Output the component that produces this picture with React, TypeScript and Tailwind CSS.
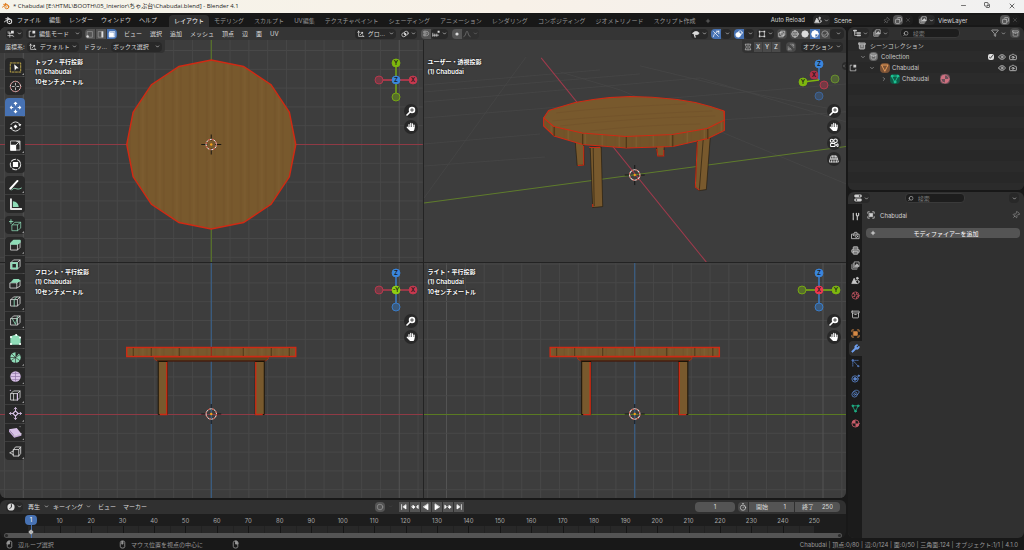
import type { ReactNode } from 'react';
import { ChevronDown, ChevronRight, ChevronLeft, Search, Pin, Copy, X, Plus, Minus, Filter, Eye, Camera, Timer, Wrench, Printer, Archive, Magnet } from 'lucide-react';

const MENUS = ['ファイル', '編集', 'レンダー', 'ウィンドウ', 'ヘルプ'];
const WORKSPACES = ['レイアウト', 'モデリング', 'スカルプト', 'UV編集', 'テクスチャペイント', 'シェーディング', 'アニメーション', 'レンダリング', 'コンポジティング', 'ジオメトリノード', 'スクリプト作成'];
const VIEW_MENUS = ['ビュー', '選択', '追加', 'メッシュ', '頂点', '辺', '面', 'UV'];

const RED = '#c8384f';
const GREEN = '#7fb80e';
const BLUE = '#3a86dd';
const MINT = '#8fdcb8';
const LILAC = '#d9c3e8';

// 20x20 drawing box shared by every hand-drawn icon
function Ico({ className = 'size-2', children }: { className?: string; children: ReactNode }) {
  return (
    <svg viewBox="0 0 20 20" className={`${className} shrink-0`} fill="none" stroke="currentColor" strokeWidth="1.8" strokeLinejoin="round" strokeLinecap="round" aria-hidden="true">
      {children}
    </svg>
  );
}

const CUBE = 'M3 7h10v10H3zM3 7l4-4h10v10l-4 4M13 7l4-4';

const icons = {
  blender: (
    <>
      <path d="M1 13L10 6H4M10 6L8 3l8 6" strokeWidth="2.2" />
      <circle cx="12" cy="12" r="5" strokeWidth="2.4" />
      <circle cx="12" cy="12" r="1.6" fill="currentColor" stroke="none" />
    </>
  ),
  mesh: (
    <>
      <path d="M4 6v9M7 4h7M7 16h7M16 7v6" />
      <path d="M2 2h4v4H2zM14 2h4v4h-4zM2 14h4v4H2zM14 14h4v4h-4z" fill="currentColor" stroke="none" />
    </>
  ),
  viewport: (
    <>
      <path d="M2 14h11M7 7v11M3 8h7" />
      <path d="M10 2h7v7h-7z" fill="currentColor" stroke="none" />
      <path d="M2 5h4M13 14l4 2" />
    </>
  ),
  editmode: (
    <>
      <path d="M3 7V3h4M17 13v4h-4M7 17H3v-4M3 9v2M9 17h2" />
      <path d="M11 2h7v7h-7z" fill="currentColor" stroke="none" />
    </>
  ),
  vert: <><path d="M3 17V4h13v13z" opacity=".5" /><circle cx="4" cy="16" r="3" fill="currentColor" stroke="none" /></>,
  edge: <><path d="M3 17V4h13v13z" opacity=".5" /><path d="M13 5v12" strokeWidth="4" /></>,
  face: <><path d="M4 16V4h13v13H4z" /><path d="M4 7h10v10H4z" fill="currentColor" /></>,
  axes: <path d="M4 3v13h13M4 3L2 6M4 3l2 3M17 16l-3-2M8 12l6-6M14 6h-4M14 6v4" />,
  link: <><circle cx="7" cy="12" r="5" /><circle cx="13" cy="8" r="5" /><circle cx="10" cy="10" r="1.5" fill="currentColor" /></>,
  snap: <><path d="M2 8v8M2 13h14M7 10v6M12 10v6" /><path d="M14 2h5v5h-5z" fill="currentColor" stroke="none" /></>,
  dot: <circle cx="10" cy="10" r="4" fill="currentColor" stroke="none" />,
  falloff: <path d="M2 17c5 0 5-14 8-14s3 14 8 14" />,
  visibility: <><path d="M2 8c4-6 12-6 16 0-4 5-12 5-16 0z" fill="currentColor" /><path d="M6 12l2 6" strokeWidth="3" /></>,
  gizmo: <path d="M3 17C5 8 12 5 17 3M17 3h-6M17 3v6M4 4l12 12" />,
  overlays: <><circle cx="8" cy="12" r="6" fill="currentColor" /><circle cx="13" cy="7" r="5" /></>,
  xray: <path d="M3 7h10v10H3zM7 7V3h10v10h-4M7 7v6h6" />,
  wire: <><circle cx="10" cy="10" r="8" /><path d="M2 10h16M10 2v16M10 2c-5 4-5 12 0 16M10 2c5 4 5 12 0 16" strokeWidth="1.2" /></>,
  solid: <circle cx="10" cy="10" r="8" fill="currentColor" />,
  matprev: <><circle cx="10" cy="10" r="8" /><path d="M10 2a8 8 0 0 0 0 16V10h8a8 8 0 0 0-8-8z" fill="currentColor" /></>,
  rendered: <><circle cx="10" cy="10" r="8" /><path d="M5 12c4 3 9 0 10-5" /></>,
  scene: <><path d="M2 16L7 5l5 11z" fill="currentColor" /><circle cx="14" cy="13" r="4" /><circle cx="14" cy="5" r="2" fill="currentColor" /></>,
  layers: <><path d="M2 8v10h11M5 5v10h10" /><path d="M8 2h10v10H8z" /><path d="M9 11l4-5 4 5z" fill="currentColor" /></>,
  outliner: <><path d="M2 4h6M11 10h7M11 16h7" strokeWidth="4" /><path d="M4 4v12h5M4 10h5" /></>,
  props: <><path d="M4 5h12" strokeWidth="7" /><path d="M4 15h12" strokeWidth="7" /><circle cx="6" cy="15" r="2" fill="#222" stroke="none" /><circle cx="14" cy="5" r="2" fill="#222" stroke="none" /></>,
  object: <><path d="M6 6h8v8H6z" fill="currentColor" /><path d="M2 6V2h4M14 2h4v4M18 14v4h-4M6 18H2v-4" /></>,
  clock: <><circle cx="10" cy="10" r="9" fill="currentColor" stroke="none" /><path d="M11 4v6l-4 4" stroke="#222" strokeWidth="2.4" /></>,
  tool: <path d="M5 3v7M5 12v5M12 3v4l2 3v7M17 3v4l-3 3" strokeWidth="2.6" />,
  render: <><path d="M2 7h16v10H2zM6 7l2-4h5l1 4" /><circle cx="12" cy="12" r="2.5" /><path d="M5 10h2" /></>,
  world: <><circle cx="10" cy="10" r="8" /><path d="M5 5l4 3-1 4-4 1M12 3l1 5 4 2M12 17l1-4 4-1" strokeWidth="2.4" /></>,
  particles: <><path d="M4 3l12 13M4 3v13M4 3h12" strokeDasharray="3 2" /><circle cx="4" cy="3" r="2" fill="currentColor" /><circle cx="16" cy="16" r="1.4" fill="currentColor" /></>,
  physics: <><circle cx="9" cy="11" r="7" /><circle cx="9" cy="11" r="3" fill="currentColor" /><circle cx="17" cy="4" r="1.6" fill="currentColor" /></>,
  constraint: <><circle cx="8" cy="12" r="6" /><circle cx="8" cy="12" r="2" /><path d="M5 6c3-5 12-4 13 0 0 4-3 5-4 7" /></>,
  data: <><path d="M4 4h12l-6 12z" /><circle cx="4" cy="4" r="2" fill="currentColor" /><circle cx="16" cy="4" r="2" fill="currentColor" /><circle cx="10" cy="16" r="2" fill="currentColor" /></>,
  material: <><circle cx="10" cy="10" r="8" /><path d="M10 2a8 8 0 0 0-8 8h8v8a8 8 0 0 0 8-8h-8z" fill="currentColor" stroke="none" /></>,
  mirror: <path d="M8 3H3l3 7-3 7h5M12 3h5l-3 7 3 7h-5M10 2v16" strokeWidth="1.5" />,
  automerge: <><path d="M3 17V9M3 17h8M8 3h9v9" strokeDasharray="3 2" /><circle cx="14" cy="6" r="2" /><circle cx="6" cy="14" r="2" /></>,
  zoom: <><circle cx="12" cy="8" r="6.5" fill="currentColor" stroke="none" /><path d="M7 13l-5 5" strokeWidth="3.2" /><path d="M12 5v6M9 8h6" stroke="#2a2a2a" strokeWidth="1.6" /></>,
  hand: (
    <>
      <path d="M6 10V5M9.500 9V2.500M13 9V3.500M16.200 10V6M2.500 10.500L6 14" strokeWidth="2.4" />
      <path d="M4.800 10h12.600c0 4-1 6-2.400 8H8c-2-2-3-4-3.200-8z" fill="currentColor" stroke="none" />
    </>
  ),
  movie: <><circle cx="5.500" cy="5.500" r="3" strokeWidth="2.2" /><circle cx="13" cy="5.500" r="3.500" strokeWidth="2.2" /><path d="M4 11h8v6H4zM14 14l4-2.500v5z" strokeWidth="2" /></>,
  persp: <path d="M5 4h10l4 12H1zM3 10h14M10 4v12M7 4L5 16M13 4l2 12" strokeWidth="1.4" />,
};

const tools: { label: string; corner?: boolean; art: ReactNode }[][] = [
  [
    {
      label: 'ボックス選択', corner: true, art: (
        <><path d="M2 3h16v14H2z" stroke="#c9b04a" strokeDasharray="3 2" strokeWidth="1.4" /><path d="M8 5l7 6-4 .5L9 15z" fill="#fff" stroke="none" /></>
      ),
    },
    {
      label: 'カーソル', art: (
        <><circle cx="10" cy="10" r="8" stroke="#ddd" strokeWidth="1.5" /><circle cx="10" cy="10" r="8" stroke="#a55" strokeDasharray="3 4" strokeWidth="1.5" /><path d="M10 5v3M10 12v3M5 10h3M12 10h3" strokeWidth="1.2" /></>
      ),
    },
  ],
  [
    { label: '移動', art: <path d="M10 2v4M10 14v4M2 10h4M14 10h4M8 4l2-2 2 2M8 16l2 2 2-2M4 8l-2 2 2 2M16 8l2 2-2 2" stroke="#fff" strokeWidth="1.6" /> },
    { label: '回転', art: <><path d="M3 7a8 8 0 0 1 14 0M17 13a8 8 0 0 1-14 0" strokeWidth="1.5" /><path d="M10 7l3 3-3 3-3-3z" fill="#fff" stroke="none" /><path d="M19 6l-2 4-3-3zM1 14l2-4 3 3z" fill="#fff" stroke="none" /></> },
    { label: 'スケール', corner: true, art: <><path d="M3 3h14v14H3z" strokeWidth="1.2" /><path d="M2 9h9v9H2z" fill="#fff" stroke="none" /><path d="M11 9l5-5M12 4h4v4" strokeWidth="1.4" /></> },
    { label: 'トランスフォーム', art: <><circle cx="10" cy="10" r="8" strokeDasharray="7 3" strokeWidth="1.6" /><path d="M6 6h8v8H6z" fill="#fff" stroke="none" /></> },
  ],
  [
    { label: 'アノテート', corner: true, art: <><path d="M2 15L13 3" stroke="#fff" strokeWidth="3" /><path d="M4 17c5-7 7 2 15-3" stroke={MINT} strokeWidth="1.4" /></> },
    { label: '計測', art: <><path d="M3 2v15h16" stroke="#e8e8e8" strokeWidth="3" /><path d="M6 14V5a10 10 0 0 1 9 9z" fill={MINT} stroke="none" /></> },
  ],
  [{ label: '立方体を追加', corner: true, art: <><path d="M5 9h8v9H5zM5 9l4-4h9v9l-5 4M13 9l5-4" stroke={MINT} strokeWidth="1.1" /><path d="M3 1v6M0 4h6" stroke={MINT} strokeWidth="1.4" /></> }],
  [
    { label: '領域を押し出し', corner: true, art: <><path d={CUBE} strokeWidth="1.2" /><path d="M3 8V6l4-4h10v3l-4 3z" fill={MINT} stroke={MINT} /></> },
    { label: '面を差し込む', art: <><path d={CUBE} strokeWidth="1.2" /><path d="M4 8h8v8H4z" stroke={MINT} strokeWidth="2.6" /></> },
    { label: 'ベベル', art: <><path d="M2 9h10v8H2zM12 9l5-4v9l-5 3" strokeWidth="1.2" /><path d="M2 9l5-6h8l3 3-5 3z" fill={MINT} stroke="none" /></> },
    { label: 'ループカット', corner: true, art: <><path d={CUBE} strokeWidth="1.2" /><path d="M8 17V7l4-4" stroke={MINT} strokeWidth="1.4" /></> },
    { label: 'ナイフ', corner: true, art: <><path d={CUBE} strokeWidth="1.2" /><path d="M5 7l5 9 3-12" stroke={MINT} strokeWidth="1.3" /></> },
    { label: 'ポリビルド', art: <><path d="M3 6l8-3 6 4v10H3z" fill={MINT} stroke={MINT} /><path d="M3 6h.1M11 3h.1M17 7h.1M17 17h.1M3 17h.1" stroke="#fff" strokeWidth="3" /></> },
    { label: 'スピン', corner: true, art: <><circle cx="10" cy="10" r="8" fill={MINT} stroke="none" /><path d="M10 10l8-5M10 10l7 5M10 10v8M10 10l-7 5M10 10H2M10 10L4 4" stroke="#303030" strokeWidth="1" /><path d="M10 10V1l6 2z" fill="#282828" stroke="none" /></> },
    { label: 'スムーズ', corner: true, art: <><circle cx="10" cy="10" r="8" fill={LILAC} stroke="none" /><path d="M2 10h16M10 2v16M5 5q3 1 10 0M5 15q3-1 10 0" stroke="#8f74a5" strokeWidth="1.1" /></> },
    { label: '辺をスライド', corner: true, art: <><path d={CUBE} strokeWidth="1.2" /><path d="M7 7v10" strokeWidth="1.2" /><path d="M2 2h.1M13 7v10" stroke={LILAC} strokeWidth="1.8" /></> },
    { label: '収縮/膨張', corner: true, art: <><path d="M10 6l4 4-4 4-4-4z" stroke={LILAC} /><path d="M10 1v5M10 14v5M1 10h5M14 10h5M8 3l2-2 2 2M8 17l2 2 2-2M3 8l-2 2 2 2M17 8l2 2-2 2" stroke={LILAC} strokeWidth="1.4" /></> },
    { label: 'せん断', corner: true, art: <><path d="M0 5l12-2 7 9-11 3z" fill={LILAC} stroke="none" /><path d="M0 5v4l8 9 11-3v-3l-11 3z" fill="#c3a8d6" stroke="none" /><path d="M8 15l11-3M17 1h.1" stroke="#eee" strokeWidth="1" /></> },
    { label: '領域をリップ', corner: true, art: <path d="M7 7h8v10H7zM7 7l3-4h8v10l-3 4M15 7l3-4M7 9l-6 3 6 3" strokeWidth="1.3" /> },
  ],
];

function IconMenu({ children, label, className = 'bg-[#282828]' }: { children: ReactNode; label: string; className?: string }) {
  return (
    <button aria-label={label} className={`flex h-[10px] shrink-0 items-center justify-center gap-[2px] rounded-sm px-px ${className}`}>
      {children}
      <ChevronDown className="size-[5px]" strokeWidth={3} />
    </button>
  );
}

function Toggle({ children, label, className = '' }: { children: ReactNode; label: string; className?: string }) {
  return (
    <button aria-label={label} className={`flex h-[10px] w-[10px] shrink-0 items-center justify-center ${className}`}>
      {children}
    </button>
  );
}

function Dropdown({ label, value, icon, className }: { label: string; value: string; icon?: ReactNode; className: string }) {
  return (
    <label className={`relative flex h-[10px] shrink-0 items-center gap-[3px] rounded-sm bg-[#282828] pl-[2px] ${className}`}>
      {icon}
      <select aria-label={label} className="h-[10px] min-w-0 flex-1 appearance-none bg-transparent leading-[10px] outline-none">
        <option>{value}</option>
      </select>
      <ChevronDown className="pointer-events-none absolute right-[2px] size-[5px]" strokeWidth={3} />
    </label>
  );
}

function SearchBox({ label }: { label: string }) {
  return (
    <label className="flex h-[10px] w-[60px] items-center gap-1 rounded-sm border border-[#3a3a3a] bg-[#1d1d1d] px-[2px]">
      <Search className="size-[7px] -scale-x-100 text-[#c8c8c8]" strokeWidth={2.5} />
      <input aria-label={label} placeholder="検索" className="h-2 w-full min-w-0 bg-transparent outline-none placeholder:text-[#777]" />
    </label>
  );
}

function TitleBar() {
  return (
    <header className="flex h-[13px] shrink-0 items-center bg-linear-to-r from-[#f5f4ea] via-[#f8f1e8] to-[#f1f1f1] pb-px pl-[2px] font-['Open_Sans','Noto_Sans_CJK_JP',sans-serif] text-[#1d1d1d]">
      <Ico className="size-2 text-[#e07b1a]">{icons.blender}</Ico>
      <h1 className="ml-[3px] text-[6px]">* Chabudai [E:\HTML\BOOTH\05_Interior\ちゃぶ台\Chabudai.blend] - Blender 4.1</h1>
      <div className="ml-auto flex">
        <button aria-label="最小化" className="flex w-6 justify-center"><Minus className="size-[7px]" /></button>
        <button aria-label="元に戻す" className="flex w-6 justify-center"><Copy className="size-[6px] -scale-x-100 rotate-90" strokeWidth={2.5} /></button>
        <button aria-label="閉じる" className="flex w-[25px] justify-center"><X className="size-2" strokeWidth={2} /></button>
      </div>
    </header>
  );
}

function TopBar() {
  return (
    <div className="flex h-[14px] shrink-0 items-center bg-[#181818] pr-1 pl-1 text-[#d6d6d6]">
      <button aria-label="Blender"><Ico className="size-[9px]">{icons.blender}</Ico></button>
      <nav className="flex pb-[2px]">
        {MENUS.map((m) => <button key={m} className="px-1 whitespace-nowrap">{m}</button>)}
      </nav>
      <div role="tablist" className="ml-2 flex items-end self-stretch text-[#989898]">
        {WORKSPACES.map((w, i) => (
          <button key={w} role="tab" aria-selected={i === 0} className={`h-[12px] rounded-t-sm px-[5px] pb-[2px] whitespace-nowrap ${i === 0 ? 'bg-[#303030] text-white' : ''}`}>{w}</button>
        ))}
        <button aria-label="ワークスペースを追加" className="flex h-[12px] items-center px-1"><Plus className="size-[6px]" /></button>
      </div>
      <button className="ml-auto pb-px whitespace-nowrap">Auto Reload</button>
      <div className="ml-2 flex h-[10px] w-[100px] items-center rounded-sm bg-[#1d1d1d]">
        <IconMenu label="シーン"><Ico>{icons.scene}</Ico></IconMenu>
        <input aria-label="シーン名" defaultValue="Scene" className="ml-1 h-[9px] min-w-0 flex-1 bg-transparent outline-none" />
        <Pin className="mr-[3px] size-[7px] rotate-45 text-[#777]" />
        <Toggle label="シーンを複製" className="rounded-sm bg-[#545454]"><Copy className="size-[7px] -scale-x-100" /></Toggle>
        <Toggle label="シーンを削除" className="text-[#666]"><X className="size-[6px]" /></Toggle>
      </div>
      <div className="ml-[5px] flex h-[10px] w-[102px] items-center rounded-sm bg-[#1d1d1d]">
        <IconMenu label="ビューレイヤー"><Ico>{icons.layers}</Ico></IconMenu>
        <input aria-label="ビューレイヤー名" defaultValue="ViewLayer" className="ml-[3px] h-[9px] min-w-0 flex-1 bg-transparent outline-none" />
        <Toggle label="レイヤーを複製" className="rounded-sm bg-[#545454]"><Copy className="size-[7px] -scale-x-100" /></Toggle>
        <Toggle label="レイヤーを削除" className="text-[#666]"><X className="size-[6px]" /></Toggle>
      </div>
    </div>
  );
}

function ViewportHeader() {
  return (
    <div className="absolute inset-x-0 top-0 z-10 text-[#dcdcdc]">
      <div className="flex h-[13px] items-center bg-[#353535] pr-[2px] pl-[6px]">
        <IconMenu label="エディタータイプ"><Ico>{icons.viewport}</Ico></IconMenu>
        <Dropdown label="モード" value="編集モード" icon={<Ico>{icons.editmode}</Ico>} className="ml-[3px] w-14" />
        <div className="ml-[3px] flex gap-px">
          <Toggle label="頂点選択" className="rounded-l-sm bg-[#545454]"><Ico>{icons.vert}</Ico></Toggle>
          <Toggle label="辺選択" className="bg-[#545454]"><Ico>{icons.edge}</Ico></Toggle>
          <Toggle label="面選択" className="rounded-r-sm bg-[#4772b3] text-white"><Ico>{icons.face}</Ico></Toggle>
        </div>
        <nav className="ml-[3px] flex">
          {VIEW_MENUS.map((m) => <button key={m} className="px-1 whitespace-nowrap">{m}</button>)}
        </nav>
        <div className="ml-[72px] flex gap-1">
          <Dropdown label="座標系" value="グロ..." icon={<Ico>{icons.axes}</Ico>} className="w-[41px]" />
          <IconMenu label="ピボットポイント"><Ico>{icons.link}</Ico></IconMenu>
          <div className="flex">
            <Toggle label="スナップ" className="rounded-l-sm bg-[#545454] text-[#999]"><Magnet className="size-[7px] rotate-45" strokeWidth={3} /></Toggle>
            <IconMenu label="スナップ先"><Ico>{icons.snap}</Ico></IconMenu>
          </div>
          <div className="flex">
            <Toggle label="プロポーショナル編集" className="rounded-l-sm bg-[#545454]"><Ico>{icons.dot}</Ico></Toggle>
            <IconMenu label="減衰" className="bg-[#303030] text-[#777]"><Ico>{icons.falloff}</Ico></IconMenu>
          </div>
        </div>
        <div className="ml-auto flex gap-[3px]">
          <IconMenu label="オブジェクトタイプの表示"><Ico>{icons.visibility}</Ico></IconMenu>
          <div className="flex">
            <Toggle label="ギズモ" className="rounded-l-sm bg-[#4772b3] text-white"><Ico>{icons.gizmo}</Ico></Toggle>
            <IconMenu label="ギズモ設定"><span className="w-px" /></IconMenu>
          </div>
          <div className="flex">
            <Toggle label="オーバーレイ" className="rounded-l-sm bg-[#4772b3] text-white"><Ico>{icons.overlays}</Ico></Toggle>
            <IconMenu label="オーバーレイ設定"><span className="w-px" /></IconMenu>
          </div>
          <IconMenu label="メッシュ編集オーバーレイ"><Ico>{icons.mesh}</Ico></IconMenu>
          <Toggle label="透過表示" className="rounded-sm bg-[#484848]"><Ico>{icons.xray}</Ico></Toggle>
          <div className="flex">
            <Toggle label="ワイヤーフレーム" className="rounded-l-sm bg-[#484848]"><Ico>{icons.wire}</Ico></Toggle>
            <Toggle label="ソリッド" className="bg-[#484848]"><Ico>{icons.solid}</Ico></Toggle>
            <Toggle label="マテリアルプレビュー" className="bg-[#4772b3] text-white"><Ico>{icons.matprev}</Ico></Toggle>
            <Toggle label="レンダー" className="bg-[#484848] text-[#aaa]"><Ico>{icons.rendered}</Ico></Toggle>
            <IconMenu label="シェーディング設定" className="w-[14px] bg-[#282828]"><span className="w-px" /></IconMenu>
          </div>
        </div>
      </div>
      <div className="flex h-[13px] items-center justify-between">
        <div className="flex h-full items-center rounded-br-sm bg-[#323232] pr-[3px] pl-[5px]">
          <span className="whitespace-nowrap">座標系:</span>
          <Dropdown label="ツールの座標系" value="デフォルト" icon={<Ico>{icons.axes}</Ico>} className="ml-[2px] w-[52px]" />
          <span className="ml-[5px] whitespace-nowrap">ドラッ...</span>
          <Dropdown label="ドラッグ" value="ボックス選択" className="ml-[4px] w-[51px]" />
        </div>
        <div className="flex h-full items-center rounded-bl-sm bg-[#323232] pr-[3px] pl-[2px]">
          <Ico>{icons.mirror}</Ico>
          <div className="ml-[2px] flex font-medium">
            {['X', 'Y', 'Z'].map((a) => <button key={a} className="h-[10px] w-[9px] border-r border-[#3c3c3c] bg-[#4a4a4a] leading-[10px]">{a}</button>)}
          </div>
          <Toggle label="自動マージ" className="ml-[5px] rounded-sm bg-[#484848] text-[#999]"><Ico>{icons.automerge}</Ico></Toggle>
          <button className="ml-[5px] flex h-[10px] items-center gap-[3px] rounded-sm bg-[#282828] px-[2px] whitespace-nowrap">オプション<ChevronDown className="size-[5px]" strokeWidth={3} /></button>
        </div>
      </div>
    </div>
  );
}

function Toolbar() {
  return (
    <div className="absolute top-[31px] left-[5px] z-10 flex w-5 flex-col gap-[3px] text-[#e0e0e0]" role="toolbar">
      {tools.map((group, gi) => (
        <div key={gi} className={`grid gap-px overflow-hidden rounded-sm ${gi === tools.length - 1 ? 'h-[223px]' : ''}`}>
          {group.map((t) => (
            <button key={t.label} aria-label={t.label} className={`relative flex items-center justify-center ${gi === tools.length - 1 ? '' : 'h-[18px]'} ${t.label === '移動' ? 'bg-[#4772b3]' : 'bg-[#282828]'}`}>
              <Ico className="size-[13px]">{t.art}</Ico>
              {t.corner && <span className="absolute right-px bottom-px size-[2px] bg-[#999] [clip-path:polygon(100%_0,100%_100%,0_100%)]" />}
            </button>
          ))}
        </div>
      ))}
    </div>
  );
}

type Ball = { x: number; y: number; c: string; t?: string; hollow?: boolean };

function Gizmo({ balls, cx = 22, cy = 22 }: { balls: Ball[]; cx?: number; cy?: number }) {
  return (
    <svg viewBox="0 0 44 44" className="mt-px size-11" aria-hidden="true">
      {balls.filter((b) => b.t || balls.length < 6).map((b, i) => <line key={i} x1={cx} y1={cy} x2={b.x} y2={b.y} stroke={b.c} strokeWidth="1.3" />)}
      {balls.map((b, i) => (
        <g key={i}>
          <circle cx={b.x} cy={b.y} r="4" fill="#3d3d3d" />
          <circle cx={b.x} cy={b.y} r="4" fill={b.c} fillOpacity={b.hollow ? 0.4 : 1} stroke={b.c} strokeWidth="0.8" />
          {b.t && <text x={b.x} y={b.y + 2} textAnchor="middle" fontSize="6" fontWeight="600" fill="#1a1a1a">{b.t}</text>}
        </g>
      ))}
    </svg>
  );
}

function Cursor3D({ x, y }: { x: number; y: number }) {
  return (
    <g fill="none">
      <path d={`M${x - 10} ${y}h6M${x + 4} ${y}h6M${x} ${y - 10}v6M${x} ${y + 4}v6`} stroke="#111" strokeWidth="0.9" />
      <circle cx={x} cy={y} r="5.2" stroke="#e8e8e8" strokeWidth="1" />
      <circle cx={x} cy={y} r="5.2" stroke="#c8402f" strokeWidth="1" strokeDasharray="2 2.1" />
      <circle cx={x} cy={y} r="1.2" fill="#f5a018" />
    </g>
  );
}

const STEP = 18.8;

function Grid({ cx, cy, x0, y0, w, h }: { cx: number; cy: number; x0: number; y0: number; w: number; h: number }) {
  const lines: ReactNode[] = [];
  for (let i = -12; i <= 12; i++) {
    const x = cx + i * STEP;
    const y = cy + i * STEP;
    const color = i % 10 === 0 ? '#545454' : '#484848';
    if (x > x0 && x < x0 + w) lines.push(<path key={`x${i}`} d={`M${x} ${y0}v${h}`} stroke={color} />);
    if (y > y0 && y < y0 + h) lines.push(<path key={`y${i}`} d={`M${x0} ${y}h${w}`} stroke={color} />);
  }
  return <g>{lines}</g>;
}

function TopView() {
  const pts = Array.from({ length: 16 }, (_, i) => {
    const a = (i * Math.PI) / 8;
    return `${(211.5 + 84.5 * Math.cos(a)).toFixed(1)},${(144.5 + 84.5 * Math.sin(a)).toFixed(1)}`;
  }).join(' ');
  return (
    <>
      <Grid cx={211.5} cy={144.5} x0={0} y0={27} w={423} h={235} />
      <path d="M0 144.5h423" stroke="#8f3a45" />
      <path d="M211.5 27v235" stroke="#5a7a22" />
      <polygon points={pts} fill="#78592d" />
      <polygon points={pts} fill="url(#grain)" stroke="#cf2a14" strokeWidth="1.5" />
      <Cursor3D x={211.5} y={144.5} />
    </>
  );
}

// Front and side elevations differ only in where they sit and the axis colour
function SideView({ cx, x0, axis }: { cx: number; x0: number; axis: string }) {
  return (
    <>
      <Grid cx={cx} cy={414.5} x0={x0} y0={263} w={423} h={236} />
      <path d={`M${x0} 414.5h423`} stroke={axis} />
      <path d={`M${cx} 263v236`} stroke="#35608f" />
      <path d={`M${cx - 57} 357h114v2l-3 2h-108l-3-2z`} fill="#5c4220" stroke="#cf2a14" strokeWidth="0.6" />
      <path d={`M${cx - 54} 361h108`} stroke="#1c1408" />
      {[-53, 44].map((dx) => (
        <g key={dx}>
          <path d={`M${cx + dx} 361.5h9v53h-9z`} fill="#78592d" stroke="#1c1408" />
          <path d={dx < 0 ? `M${cx + dx + 8.5} 362v52.5h-7` : `M${cx + dx + 0.5} 362v52.5h7`} fill="none" stroke="#cf2a14" strokeWidth="1.3" />
        </g>
      ))}
      <path d={`M${cx - 84.5} 347.5h169v9h-169z`} fill="#78592d" />
      <path d={`M${cx - 84.5} 347.5h169v9h-169z`} fill="url(#grain)" stroke="#cf2a14" strokeWidth="1.4" />
      {[-78, -60, -32, 32, 60, 78].map((dx) => <path key={dx} d={`M${cx + dx} 348v8`} stroke="#4a3315" strokeWidth="0.9" />)}
      <path d={`M${cx} 347v9`} stroke="#a02010" />
      <Cursor3D x={cx} y={414} />
    </>
  );
}

function PerspectiveView() {
  return (
    <>
      <g stroke="#474747" strokeWidth="0.7" fill="none">
        <path d="M424 198L507 83L526 57M424 144L540 134M424 118L846 84M424 102L700 78M424 92L640 74M424 85L600 70M620 90L846 184M700 78L846 122M560 72L620 90M640 66L760 95L846 112M720 120L846 112M424 166L545 157" />
      </g>
      <path d="M541 58L706 262" stroke="#a03a4c" />
      <path d="M424 203L846 146.500" stroke="#5f7c2c" />
      <g stroke="#20170a" strokeWidth="0.6" fill="#78592d">
        <path d="M575 141l8.500 2 .5 22-7 .5z" />
        <path d="M656 145h8l-.5 11h-6z" />
        <path d="M697 139l13-3-4 53.500-7 1-4-3.500z" />
        <path d="M703 138l-4 52" />
        <path d="M590 147h11l1.500 59.500-10 1z" />
        <path d="M593 148l1 58" />
      </g>
      <path d="M583.500 146v19l-6 .5M656.500 149l1 7h6v-6M697 142l-2 45 4 3M592.500 204v3M589 147.500h11" stroke="#cf2a14" strokeWidth="1" fill="none" />
      <path d="M543.500 118v8l10.500 10 28.500 8.500 43.500 3.500 46.500-1.500 35-8 16.500-8v-19z" fill="#735429" />
      <path d="M543.500 118v8l10.500 10 28.500 8.500 43.500 3.500 46.500-1.500 35-8 16.500-8v-19z" fill="url(#grain)" stroke="#cf2a14" strokeWidth="1.1" />
      <path d="M543.500 118l5-7.500 26.500-8 18-3 16-1.800 21-1.200 22 .8 25 2.200 18 3 15 4 13.500 4.500 .5 9-17 8.500-35 6-46.500 2-43.500-3.500-28.500-6.500z" fill="#78592d" stroke="#cf2a14" strokeWidth="1.1" />
      <path d="M552 121q60-6 160-10M560 126q70-8 155-10M556 113q50-6 130-9M590 131q50-6 110-7" stroke="#72532a" strokeWidth="0.8" fill="none" />
      <path d="M554 127v9M582.500 134v10.500M626 137v11M672.500 135v11.500M707.500 129v10" stroke="#3a270f" strokeWidth="0.8" />
      <Cursor3D x={634.5} y={175} />
    </>
  );
}

function View({ viewBox, title, lines, gizmo, upper, extra, left, children }: { viewBox: string; title: string; lines: string[]; gizmo: ReactNode; upper?: boolean; extra?: boolean; left?: boolean; children: ReactNode }) {
  return (
    <section aria-label={title} className={`relative flex items-start justify-between overflow-hidden bg-[#3d3d3d] pr-[5px] ${upper ? 'pt-[30px]' : 'pt-1'}`}>
      <svg viewBox={viewBox} preserveAspectRatio="xMidYMid slice" className="absolute inset-0 size-full">
        <defs>
          <pattern id="grain" width="17" height="600" patternUnits="userSpaceOnUse">
            <path d="M3 0v600M11 0v600" stroke="#705128" strokeWidth="0.8" />
            <path d="M7 0v600" stroke="#7d5e31" strokeWidth="1.2" />
          </pattern>
        </defs>
        {children}
      </svg>
      <div className={`relative leading-[10px] font-semibold text-white [text-shadow:0_0_2px_#000] ${left ? 'pl-[35px]' : 'pl-1'}`}>
        <p>{title}</p>
        {lines.map((l) => <p key={l}>{l}</p>)}
      </div>
      <div className="relative flex flex-col items-end gap-[2px] text-white">
        {gizmo}
        <ViewButton label="ズーム"><Ico className="size-[10px]">{icons.zoom}</Ico></ViewButton>
        <ViewButton label="移動"><Ico className="size-[10px]">{icons.hand}</Ico></ViewButton>
        {extra && <ViewButton label="カメラ"><Ico className="size-[10px]">{icons.movie}</Ico></ViewButton>}
        {extra && <ViewButton label="透視/平行投影"><Ico className="size-[10px]">{icons.persp}</Ico></ViewButton>}
      </div>
    </section>
  );
}

function ViewButton({ label, children }: { label: string; children: ReactNode }) {
  return <button aria-label={label} className="flex size-[14px] items-center justify-center rounded-full bg-[#282828]">{children}</button>;
}

function Viewport() {
  return (
    <main className="relative min-h-0 flex-1 overflow-hidden rounded-md">
      <ViewportHeader />
      <Toolbar />
      <div className="grid h-full grid-cols-2 grid-rows-2 gap-px bg-[#232323]">
        <View
          viewBox="0 27 423 235" upper left title="トップ・平行投影" lines={['(1) Chabudai', '10センチメートル']}
          gizmo={<Gizmo balls={[{ x: 22, y: 5, c: GREEN, t: 'Y' }, { x: 5, y: 22, c: RED, hollow: true }, { x: 39, y: 22, c: RED, t: 'X' }, { x: 22, y: 39, c: GREEN, hollow: true }, { x: 22, y: 22, c: BLUE, t: 'Z' }]} />}
        >
          <TopView />
        </View>
        <View
          viewBox="424 27 422 235" upper extra title="ユーザー・透視投影" lines={['(1) Chabudai']}
          gizmo={<Gizmo balls={[{ x: 22, y: 38, c: '#3d6ba8', hollow: true }, { x: 38, y: 21, c: '#6f9a2c', hollow: true }, { x: 17, y: 17, c: '#b03048', t: 'X' }, { x: 27, y: 27, c: RED, hollow: true }, { x: 22, y: 6, c: BLUE, t: 'Z' }, { x: 6, y: 24, c: GREEN, t: 'Y' }]} />}
        >
          <PerspectiveView />
        </View>
        <View
          viewBox="0 263 423 235" left title="フロント・平行投影" lines={['(1) Chabudai', '10センチメートル']}
          gizmo={<Gizmo balls={[{ x: 22, y: 5, c: BLUE, t: 'Z' }, { x: 5, y: 22, c: RED, hollow: true }, { x: 39, y: 22, c: RED, t: 'X' }, { x: 22, y: 39, c: BLUE, hollow: true }, { x: 22, y: 22, c: '#8fd011', t: '-Y' }]} />}
        >
          <SideView cx={211.5} x0={0} axis="#8f3a45" />
        </View>
        <View
          viewBox="424 263 422 235" title="ライト・平行投影" lines={['(1) Chabudai', '10センチメートル']}
          gizmo={<Gizmo balls={[{ x: 22, y: 5, c: BLUE, t: 'Z' }, { x: 5, y: 22, c: GREEN, hollow: true }, { x: 39, y: 22, c: GREEN, t: 'Y' }, { x: 22, y: 39, c: BLUE, hollow: true }, { x: 22, y: 22, c: '#f0384f', t: 'X' }]} />}
        >
          <SideView cx={634.5} x0={424} axis="#5a7a22" />
        </View>
      </div>
      <button aria-label="サイドバー" className="absolute top-[35px] right-0 z-10 flex h-2 w-1 items-center rounded-l-sm bg-[#2a2a2a] text-[#aaa]"><ChevronLeft className="size-1" strokeWidth={3} /></button>
    </main>
  );
}

const transport = [
  { label: '最初のフレーム', art: <path d="M4 4v12M15 5v10l-7-5z" fill="currentColor" /> },
  { label: '前のキーフレーム', art: <path d="M6 6l4 4-4 4-4-4zM18 6v8l-4-4z" fill="currentColor" /> },
  { label: '逆再生', art: <path d="M15 3v14L4 10z" fill="currentColor" /> },
  { label: '再生する', art: <path d="M5 3v14l11-7z" fill="currentColor" /> },
  { label: '次のキーフレーム', art: <path d="M14 6l4 4-4 4-4-4zM2 6v8l4-4z" fill="currentColor" /> },
  { label: '最後のフレーム', art: <path d="M16 4v12M5 5v10l7-5z" fill="currentColor" /> },
];

function Timeline() {
  const frames = Array.from({ length: 25 }, (_, i) => (i + 1) * 10);
  return (
    <section aria-label="タイムライン" className="relative shrink-0 overflow-hidden rounded-md bg-[#1d1d1d] text-[#dcdcdc]">
      <div className="flex h-[14px] items-center bg-[#303030] pr-[6px] pb-px pl-[6px]">
        <IconMenu label="エディタータイプ"><Ico>{icons.clock}</Ico></IconMenu>
        <button className="ml-1 flex h-[10px] items-center gap-1 px-px whitespace-nowrap">再生<ChevronDown className="size-[5px]" strokeWidth={3} /></button>
        <button className="flex h-[10px] items-center gap-[3px] px-[3px] whitespace-nowrap">キーイング<ChevronDown className="size-[5px]" strokeWidth={3} /></button>
        <button className="pr-[3px] pl-1">ビュー</button>
        <button className="px-1 whitespace-nowrap">マーカー</button>
        <Toggle label="自動キー挿入" className="ml-[224px] rounded-sm bg-[#545454] text-[#999]"><Ico><circle cx="10" cy="10" r="7" /></Ico></Toggle>
        <Toggle label="キー挿入設定" className="text-[#555]"><ChevronDown className="size-[5px]" /></Toggle>
        <div className="ml-1 flex gap-px">
          {transport.map((t) => <Toggle key={t.label} label={t.label} className="bg-[#545454] text-white"><Ico>{t.art}</Ico></Toggle>)}
        </div>
        <input aria-label="現在のフレーム" defaultValue="1" className="ml-auto h-[10px] w-10 rounded-sm bg-[#545454] text-center outline-none" />
        <Toggle label="プレビュー範囲" className="ml-[3px] rounded-l-sm bg-[#484848]"><Timer className="size-2" /></Toggle>
        <label className="ml-px flex h-[10px] w-[45px] items-center bg-[#545454] pr-2 pl-[7px] whitespace-nowrap">開始<input defaultValue="1" className="w-0 min-w-0 flex-1 bg-transparent text-right outline-none" /></label>
        <label className="ml-px flex h-[10px] w-[45px] items-center rounded-r-sm bg-[#545454] px-[7px] whitespace-nowrap">終了<input defaultValue="250" className="w-0 min-w-0 flex-1 bg-transparent text-right outline-none" /></label>
      </div>
      <div className="mr-4 ml-11 grid h-[12px] grid-cols-[repeat(25,minmax(0,1fr))] items-center text-center text-[#a8a8a8]">
        {frames.map((f) => <span key={f}>{f}</span>)}
      </div>
      <div className="mr-8 ml-7 h-[7px] overflow-hidden bg-[#282828]">
        <div className="-mr-4 ml-4 grid h-full grid-cols-[repeat(25,minmax(0,1fr))]">
          {frames.map((f) => <span key={f} className="flex justify-center border-l border-[#222]"><i className="w-px bg-[#161616]" /></span>)}
        </div>
      </div>
      <div className="mx-1 flex h-[5px] items-center justify-between rounded-full bg-[#545454] px-px">
        <span className="size-[3px] rounded-full bg-[#2a2a2a]" />
        <span className="size-[3px] rounded-full bg-[#2a2a2a]" />
      </div>
      {/* playhead */}
      <div className="absolute top-[15px] left-[25px] flex w-3 flex-col items-center">
        <span className="h-[10px] w-full rounded-sm bg-[#4772b3] text-center leading-[10px] text-white">1</span>
        <span className="h-[13px] w-px bg-[#4772b3]" />
      </div>
      <span className="absolute top-[30px] left-[29px] size-1 rotate-45 rounded-[1px] bg-[#b8b8b8]" />
    </section>
  );
}

function Outliner() {
  return (
    <section aria-label="アウトライナー" className="flex h-[163px] shrink-0 flex-col overflow-hidden rounded-md bg-[#282828] text-[#c8c8c8]">
      <div className="flex h-[13px] shrink-0 items-center bg-[#303030] pr-1 pb-px pl-1">
        <IconMenu label="エディタータイプ"><Ico>{icons.outliner}</Ico></IconMenu>
        <IconMenu label="表示モード" className="ml-[3px] bg-[#282828]"><Ico>{icons.layers}</Ico></IconMenu>
        <div className="ml-[11px]"><SearchBox label="アウトライナーを検索" /></div>
        <IconMenu label="フィルター" className="mr-[3px] ml-auto"><Filter className="size-2" /></IconMenu>
        <Toggle label="新規コレクション" className="rounded-sm bg-[#484848]"><Archive className="size-[7px]" /></Toggle>
      </div>
      <ul className="min-h-0 flex-1 overflow-hidden [&>li]:flex [&>li]:h-[11px] [&>li]:items-center [&>li:nth-child(even)]:bg-[#2b2b2b]">
        <li className="pl-[10px]"><Archive className="mr-[4px] size-2" fill="#777" strokeWidth={2.5} />シーンコレクション</li>
        <li className="pr-[7px] pl-3">
          <ChevronDown className="mr-[3px] size-[6px]" />
          <Archive className="mr-[3px] size-[9px] rounded-sm bg-[#666] p-px" strokeWidth={2.5} />
          <span className="flex-1">Collection</span>
          <input type="checkbox" aria-label="Collectionを含める" defaultChecked className="mr-1 size-[6px] accent-[#e0e0e0]" />
          <Eye className="mr-[3px] size-2" strokeWidth={2.5} />
          <Camera className="size-2" strokeWidth={2.5} />
        </li>
        <li className="pr-[7px] pl-px">
          <Ico className="mr-3 size-2">{icons.editmode}</Ico>
          <ChevronDown className="mr-[5px] size-[6px]" />
          <Ico className="mr-[2px] size-[10px] rounded-sm bg-[#7a5236] text-[#f0a35c]"><path d="M4 4h12l-6 12z" /></Ico>
          <span className="flex-1">Chabudai</span>
          <Eye className="mr-[3px] size-2" strokeWidth={2.5} />
          <Camera className="size-2" strokeWidth={2.5} />
        </li>
        <li className="pl-[33px]">
          <ChevronRight className="mr-[3px] size-[6px]" />
          <Ico className="mr-[2px] size-[10px] rounded-sm bg-[#0f5c48] text-[#1fc596]">{icons.data}</Ico>
          <span>Chabudai</span>
          <Ico className="ml-[11px] size-[10px] rounded-sm bg-[#6a5058] text-[#cf7080]">{icons.material}</Ico>
        </li>
        {Array.from({ length: 10 }, (_, i) => <li key={i} />)}
      </ul>
    </section>
  );
}

const propTabs: { label: string; color: string; art: ReactNode }[][] = [
  [{ label: 'ツール', color: 'text-[#c8c8c8]', art: <Ico className="size-[9px]">{icons.tool}</Ico> }],
  [
    { label: 'レンダー', color: 'text-[#c8c8c8]', art: <Ico className="size-[9px]">{icons.render}</Ico> },
    { label: '出力', color: 'text-[#c8c8c8]', art: <Printer className="size-[9px]" fill="#777" /> },
    { label: 'ビューレイヤー', color: 'text-[#b8b8b8]', art: <Ico className="size-[9px]">{icons.layers}</Ico> },
    { label: 'シーン', color: 'text-[#c8c8c8]', art: <Ico className="size-[9px]">{icons.scene}</Ico> },
    { label: 'ワールド', color: 'text-[#b34f5a]', art: <Ico className="size-[9px]">{icons.world}</Ico> },
  ],
  [{ label: 'コレクション', color: 'text-[#d8d8d8]', art: <Archive className="size-[9px]" /> }],
  [
    { label: 'オブジェクト', color: 'text-[#d88a45]', art: <Ico className="size-[9px]">{icons.object}</Ico> },
    { label: 'モディファイアー', color: 'text-[#6f9fee]', art: <Wrench className="size-[9px]" fill="#6f9fee" /> },
    { label: 'パーティクル', color: 'text-[#5478b8]', art: <Ico className="size-[9px]">{icons.particles}</Ico> },
    { label: '物理演算', color: 'text-[#5c86cc]', art: <Ico className="size-[9px]">{icons.physics}</Ico> },
    { label: 'コンストレイント', color: 'text-[#5c86cc]', art: <Ico className="size-[9px]">{icons.constraint}</Ico> },
    { label: 'データ', color: 'text-[#1fae84]', art: <Ico className="size-[9px]">{icons.data}</Ico> },
    { label: 'マテリアル', color: 'text-[#c95d6a]', art: <Ico className="size-[9px]">{icons.material}</Ico> },
  ],
];

function Properties() {
  return (
    <section aria-label="プロパティ" className="flex min-h-0 flex-1 flex-col overflow-hidden rounded-md bg-[#303030] text-[#d0d0d0]">
      <div className="flex h-[12px] shrink-0 items-center pr-[5px] pl-[5px]">
        <IconMenu label="エディタータイプ"><Ico>{icons.props}</Ico></IconMenu>
        <div className="ml-[35px]"><SearchBox label="プロパティを検索" /></div>
        <Toggle label="オプション" className="ml-auto rounded-sm bg-[#282828]"><ChevronDown className="size-[5px]" strokeWidth={3} /></Toggle>
      </div>
      <div className="flex min-h-0 flex-1">
        <div role="tablist" className="flex w-[14px] flex-col gap-1 bg-[#1b1b1b] pt-[5px] pl-px">
          {propTabs.map((g, i) => (
            <div key={i} className="flex flex-col">
              {g.map((t) => (
                <button key={t.label} role="tab" aria-label={t.label} aria-selected={t.label === 'モディファイアー'} className={`flex h-[15px] items-center justify-center ${t.color} ${t.label === 'モディファイアー' ? 'rounded-l-sm bg-[#303030]' : ''}`}>
                  {t.art}
                </button>
              ))}
            </div>
          ))}
        </div>
        <div className="flex-1 pr-[4px] pl-1">
          <div className="mt-1 flex h-[14px] items-center pl-px">
            <Ico className="mr-[5px] size-2">{icons.object}</Ico>
            <span className="flex-1">Chabudai</span>
            <Pin className="size-2 rotate-45 text-[#999]" />
          </div>
          <button className="mt-[6px] flex h-[10px] w-full items-center rounded-sm bg-[#545454] px-1 text-white">
            <Plus className="size-[6px]" strokeWidth={3} />
            <span className="flex-1">モディファイアーを追加</span>
          </button>
        </div>
      </div>
    </section>
  );
}

function Mouse({ d }: { d: string }) {
  return <Ico className="size-[9px]"><path d="M5 5q0-3 5-3t5 3v10q0 3-5 3t-5-3z" /><path d={d} fill="currentColor" /></Ico>;
}

function StatusBar() {
  return (
    <footer className="mt-px flex h-[11px] shrink-0 items-center bg-[#181818] pr-[6px] pl-[5px] whitespace-nowrap text-[#999]">
      <span className="flex w-[113px] items-center gap-1"><Mouse d="M5 5q1-3 5-3v7H5z" />辺ループ選択</span>
      <span className="flex w-[113px] items-center gap-1"><Mouse d="M9 3h2v6H9z" />マウス位置を視点の中心に</span>
      <Mouse d="M15 5q-1-3-5-3v7h5z" />
      <span className="ml-auto">Chabudai | 頂点:0/80 | 辺:0/124 | 面:0/50 | 三角面:124 | オブジェクト:1/1 | 4.1.0</span>
    </footer>
  );
}

export default function App() {
  return (
    <div className="flex h-screen flex-col overflow-hidden bg-[#181818] font-['Inter','Noto_Sans_CJK_JP',sans-serif] text-[6px] leading-[9px]">
      <TitleBar />
      <TopBar />
      <div className="flex min-h-0 flex-1 gap-[2px]">
        <div className="flex min-w-0 flex-1 flex-col gap-[2px]">
          <Viewport />
          <Timeline />
        </div>
        <aside className="flex w-[176px] shrink-0 flex-col gap-[2px]">
          <Outliner />
          <Properties />
        </aside>
      </div>
      <StatusBar />
    </div>
  );
}
